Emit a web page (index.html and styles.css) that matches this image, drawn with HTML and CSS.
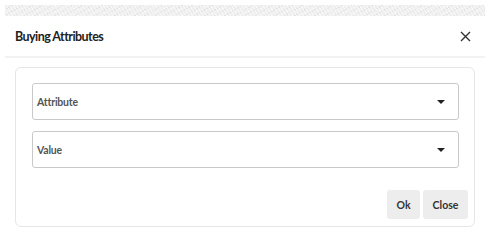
FILE: index.html
```html
<!DOCTYPE html>
<html>
<head>
<meta charset="utf-8">
<link rel="stylesheet" href="styles.css">
</head>
<body>
<div class="band"></div>
<div class="dialog">
  <div class="header">
    <span class="title">Buying Attributes</span>
    <button class="x" aria-label="Close">
      <svg width="11" height="11" viewBox="0 0 11 11"><path d="M1 1L10 10M10 1L1 10" stroke="#333" stroke-width="1.4" fill="none"/></svg>
    </button>
  </div>
  <div class="card">
    <div class="field"><span class="label">Attribute</span><span class="caret"></span></div>
    <div class="field"><span class="label">Value</span><span class="caret"></span></div>
    <div class="actions">
      <button class="btn ok">Ok</button>
      <button class="btn close">Close</button>
    </div>
  </div>
</div>
</body>
</html>
```

FILE: styles.css
```css
html, body {
  margin: 0;
  padding: 0;
  background: #fff;
  font-family: "Lato", "Open Sans", sans-serif;
}
.band {
  margin: 5px 5px 0 5px;
  height: 11px;
  background-color: #efefef;
  background-image:
    repeating-linear-gradient(60deg, rgba(255,255,255,0.55) 0 1px, transparent 1px 3px),
    repeating-linear-gradient(-30deg, rgba(215,215,215,0.45) 0 1px, transparent 1px 5px);
}
.dialog {
  display: flex;
  flex-direction: column;
}
.header {
  display: flex;
  align-items: center;
  justify-content: space-between;
  margin: 1px 5px 0 5px;
  height: 39px;
  padding: 0 14px 0 10px;
  border-bottom: 2px solid #f2f2f2;
}
.title {
  font-size: 12.5px;
  font-weight: 700;
  color: #222;
  letter-spacing: -0.55px;
}
.x {
  border: 0;
  background: none;
  padding: 0;
  width: 11px;
  height: 11px;
  display: flex;
}
.card {
  margin: 9px 15px 6px 15px;
  border: 1px solid #e6e6e6;
  border-radius: 6px;
  padding: 15px 15px 5px 16px;
  display: flex;
  flex-direction: column;
  gap: 11px;
  height: 138px;
  box-sizing: content-box;
}
.field {
  height: 35px;
  border: 1px solid #c9c9c9;
  border-radius: 3px;
  display: flex;
  align-items: center;
  justify-content: space-between;
  padding: 0 13px 0 4px;
}
.label {
  font-size: 10.5px;
  font-weight: 700;
  color: #555;
  letter-spacing: -0.2px;
}
.caret {
  width: 0;
  height: 0;
  border-left: 4px solid transparent;
  border-right: 4px solid transparent;
  border-top: 4px solid #222;
}
.actions {
  display: flex;
  justify-content: flex-end;
  gap: 3px;
  margin-top: 11px;
  margin-right: -9px;
}
.btn {
  height: 29px;
  border: 0;
  border-radius: 3px;
  background: #ededed;
  font-family: "Lato", "Open Sans", sans-serif;
  font-size: 10.5px;
  font-weight: 700;
  color: #333;
  padding: 0;
}
.ok { width: 33px; }
.close { width: 45px; }
```
